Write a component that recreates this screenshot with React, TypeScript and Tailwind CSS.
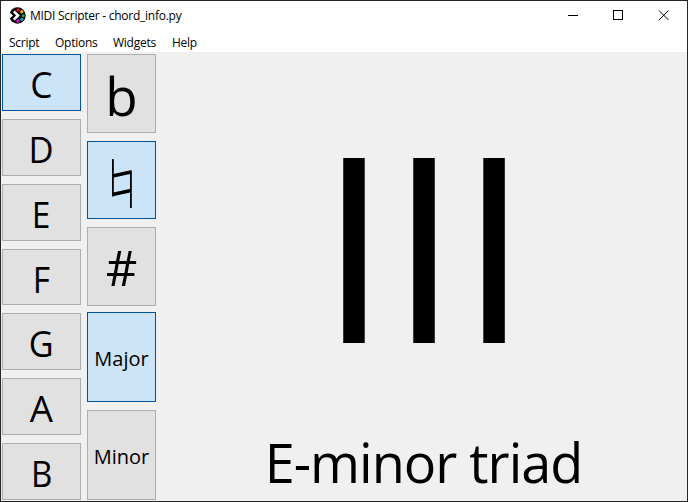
import type { ReactNode } from "react";

const base =
  "flex items-center justify-center border text-black whitespace-nowrap overflow-hidden shrink-0";
const off = "border-[#adadad] bg-[#e1e1e1]";
const on = "border-[#005499] bg-[#cce4f7]";

function Toggle({ active, className, children }: { active?: boolean; className: string; children: ReactNode }) {
  return <button className={`${base} ${active ? on : off} ${className}`}>{children}</button>;
}

const notes = [
  { name: "C", height: "h-[57px]", scale: "scale-x-[0.98]" },
  { name: "D", height: "h-[57px]", scale: "scale-x-[0.96]" },
  { name: "E", height: "h-[57px]", scale: "scale-x-[0.93]" },
  { name: "F", height: "h-[56px]", scale: "scale-x-[0.93]" },
  { name: "G", height: "h-[57px]", scale: "scale-x-[0.95]" },
  { name: "A", height: "h-[57px]", scale: "scale-x-[1.02]" },
  { name: "B", height: "h-[57px]", scale: "scale-x-[0.92]" },
];

function AppIcon() {
  return (
    <svg width="17" height="17" viewBox="0 0 17 17" className="shrink-0">
      <circle cx="8.5" cy="8.5" r="8.2" fill="#050505" />
      <path d="M0.200 5 L4 8.5 L0.200 12Z" fill="#fff" />
      <path d="M4.800 4.400 L9 8.5 L4.800 12.600" fill="none" stroke="#fff" strokeWidth="2.600" />
      <circle cx="9" cy="3" r="1.700" fill="#e8101c" />
      <circle cx="12.800" cy="4.800" r="1.700" fill="#f0a010" />
      <circle cx="14.200" cy="8.700" r="1.500" fill="#20b040" />
      <circle cx="12.700" cy="12.300" r="1.600" fill="#10a8e8" />
      <circle cx="9" cy="14" r="1.700" fill="#e010e0" />
    </svg>
  );
}

export default function App() {
  return (
    <div className="flex h-[502px] w-[688px] flex-col overflow-hidden border border-[#262427] bg-[#f0f0f0] font-['Open_Sans','Noto_Sans',sans-serif] text-black">
      <header className="flex h-[29px] shrink-0 items-center bg-white pl-2">
        <AppIcon />
        <span className="ml-[4px] text-[12px] leading-none tracking-[-0.26px]">MIDI Scripter - chord_info.py</span>
        <svg width="138" height="29" viewBox="0 0 138 29" className="ml-auto" fill="none" stroke="#000" shapeRendering="crispEdges">
          <path d="M19 14.5h10" />
          <path d="M64.5 9.5h9v9h-9z" />
          <path d="M110 9.5l9.5 9.5M119.5 9.5l-9.5 9.5" shapeRendering="auto" />
        </svg>
      </header>
      <nav className="flex h-[22px] shrink-0 items-center bg-white pl-2 pt-1 text-[12px] leading-none tracking-[-0.25px]">
        <span className="w-[46px]">Script</span>
        <span className="w-[58px]">Options</span>
        <span className="w-[59px]">Widgets</span>
        <span>Help</span>
      </nav>
      <main className="flex min-h-0 flex-1 pl-px pt-[2px]">
        <div className="flex w-[79px] shrink-0 flex-col gap-2">
          {notes.map((n, i) => (
            <Toggle key={n.name} active={i === 0} className={`${n.height} pt-[5px] text-[36px]`}>
              <span className={n.scale}>{n.name}</span>
            </Toggle>
          ))}
        </div>
        <div className="ml-[6px] flex w-[69px] shrink-0 flex-col">
          <Toggle className="h-[79px] pt-[4px] text-[53px]">b</Toggle>
          <Toggle active className="mt-2 h-[78px] pt-[8px]">
            <svg width="23" height="52" viewBox="0 0 23 52" fill="none" stroke="#000">
              <path d="M2.900 1v37.500M20.900 12.500v37.500" strokeWidth="1.800" />
              <path d="M2.500 18l18.500-4M2.500 36.500l18.500-4" strokeWidth="3.500" />
            </svg>
          </Toggle>
          <Toggle className="mt-2 h-[79px] pt-[2px] text-[49px]">#</Toggle>
          <Toggle active className="mt-[6px] h-[90px] pt-[4px] text-[20px]">Major</Toggle>
          <Toggle className="mt-2 h-[90px] pt-[4px] text-[20px]">Minor</Toggle>
        </div>
        <section className="flex min-w-0 flex-1 flex-col items-center">
          <div className="flex h-[375px] items-center pl-[3px] pt-[2px] text-[259px] leading-none tracking-[-2.3px]">III</div>
          <div className="flex flex-1 items-center whitespace-nowrap pb-[6px] pl-1 text-[54px] leading-none tracking-[-1px]">E-minor triad</div>
        </section>
      </main>
    </div>
  );
}
